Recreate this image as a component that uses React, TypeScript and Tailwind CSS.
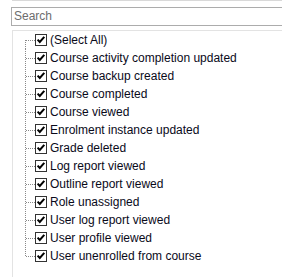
const items = [
  "(Select All)",
  "Course activity completion updated",
  "Course backup created",
  "Course completed",
  "Course viewed",
  "Enrolment instance updated",
  "Grade deleted",
  "Log report viewed",
  "Outline report viewed",
  "Role unassigned",
  "User log report viewed",
  "User profile viewed",
  "User unenrolled from course",
];

function Connector({ first, last }: { first: boolean; last: boolean }) {
  // dotted tree lines: vertical at x=12.5, horizontal to the checkbox
  return (
    <svg width="22" height="18" className="shrink-0" shapeRendering="crispEdges">
      <line
        x1="12.5"
        x2="12.5"
        y1={first ? 9 : 0}
        y2={last ? 10 : 18}
        stroke="#8a8a8a"
        strokeWidth="1"
        strokeDasharray="1 1"
      />
      <line x1="13" x2="22" y1="9.5" y2="9.5" stroke="#8a8a8a" strokeWidth="1" strokeDasharray="1 1" />
    </svg>
  );
}

function CheckBox() {
  return (
    <svg width="12" height="12" viewBox="0 0 12 12" className="shrink-0">
      <rect x="0.5" y="0.5" width="11" height="11" fill="#fff" stroke="#333" />
      <path d="M2.6 5.6 L4.8 8 L9.3 2.9" fill="none" stroke="#000" strokeWidth="2" />
    </svg>
  );
}

export default function App() {
  return (
    <div className="w-[282px] h-[277px] bg-white overflow-hidden font-['Liberation_Sans',Arial,sans-serif]">
      <div className="ml-[12px] h-[2px] border-t border-[#d9d9d9]" />
      <div className="mt-[5px] ml-[11px] w-[300px] h-[19px] border border-[#acacac] pl-[2px] text-[12px] leading-[17px] text-[#6d6d6d]">
        Search
      </div>
      <div className="mt-[4px] ml-[12px] w-[300px] h-[260px] border-l border-t border-[#e3e3e3]">
        {items.map((label, i) => (
          <div key={label} className="flex items-center h-[18px]">
            <Connector first={i === 0} last={i === items.length - 1} />
            <CheckBox />
            <span className="ml-[3px] text-[12px] leading-[18px] text-[#0a0a1a] whitespace-nowrap">{label}</span>
          </div>
        ))}
      </div>
    </div>
  );
}
